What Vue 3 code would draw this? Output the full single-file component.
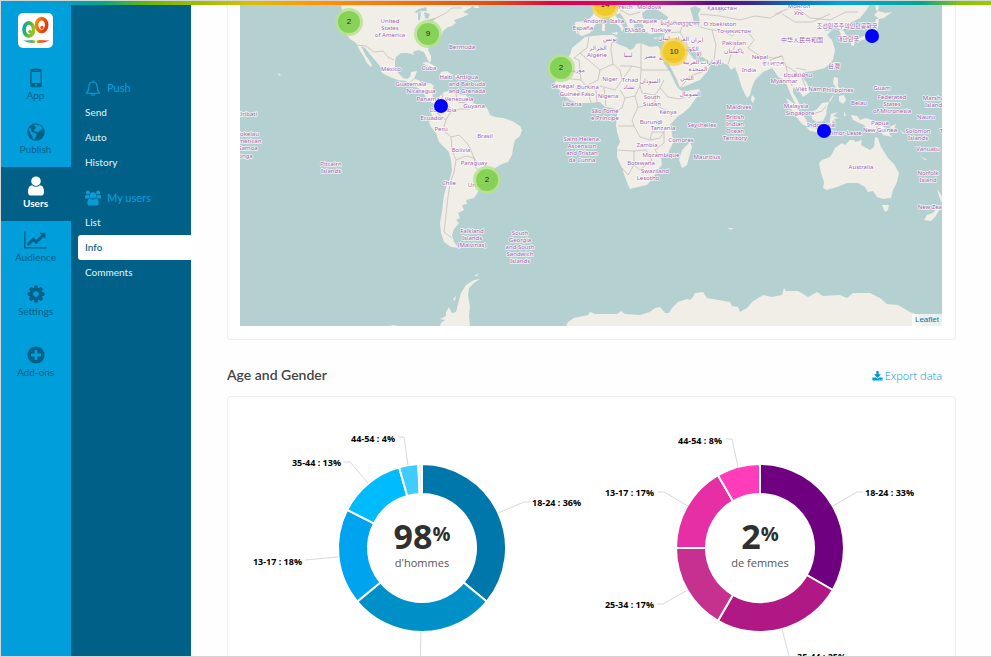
<script setup>
const railItems = [
  { label: 'App', icon: 'phone' },
  { label: 'Publish', icon: 'globe' },
  { label: 'Users', icon: 'user', active: true },
  { label: 'Audience', icon: 'chart' },
  { label: 'Settings', icon: 'gear' },
  { label: 'Add-ons', icon: 'plus', spaced: true },
]

const menuGroups = [
  { title: 'Push', icon: 'bell', items: ['Send', 'Auto', 'History'] },
  { title: 'My users', icon: 'group', items: ['List', 'Info', 'Comments'] },
]
const activeMenu = 'Info'

// The map canvas spans 702 x 321 units with its origin at (240, 5).
const MAP = { x: 240, y: 5, w: 702, h: 321 }
const place = (m) => ({
  left: ((m.x - MAP.x) / MAP.w) * 100 + '%',
  top: ((m.y - MAP.y) / MAP.h) * 100 + '%',
})

const clusters = [
  { x: 349, y: 22, n: 2, tone: 'green' },
  { x: 428, y: 34, n: 9, tone: 'green' },
  { x: 561, y: 68, n: 2, tone: 'green' },
  { x: 487, y: 180, n: 2, tone: 'green' },
  { x: 605, y: 5, n: 14, tone: 'yellow' },
  { x: 674, y: 52, n: 10, tone: 'yellow' },
]
const dots = [
  { x: 441, y: 106 },
  { x: 872, y: 36 },
  { x: 824, y: 131 },
]

const land = [
  // North and Central America
  'M341 5 343 14 342 25 346 34 350 39 356 43 358 47 360 51 364 57 367 63 371 67 372 65 369 60 366 56 363 50 361 46 365 48 369 53 374 59 379 65 382 69 382 73 390 77 398 80 406 81 412 85 418 88 423 91 425 96 428 100 434 104 440 104 444 102 438 100 433 97 432 91 434 86 430 83 422 84 419 80 414 79 416 74 417 71 411 72 410 77 407 79 403 78 399 74 395 67 395 61 396 57 401 53 408 53 414 55 413 52 418 50 424 52 427 58 429 63 431 61 431 56 428 50 429 45 436 38 442 35 443 31 448 27 452 26 456 23 454 20 463 17 469 14 463 12 470 8 474 5Z',
  'M472 5 478 5 479 8 475 8Z',
  'M422 63 427 62 433 65 438 69 434 70 428 66Z M441 72 447 71 452 75 446 77 440 75Z M455 75 459 75 459 77 455 77Z',
  // South America
  'M438 102 439 97 444 92 449 91 456 94 466 95 469 100 475 104 480 105 487 108 490 115 495 117 503 118 512 121 520 126 522 130 520 136 515 140 513 148 512 155 508 162 502 164 495 168 493 176 488 187 479 189 477 194 474 198 466 200 467 204 462 205 464 210 458 213 460 218 456 220 459 223 454 229 452 235 454 242 459 248 451 247 444 242 441 233 440 223 442 212 443 203 444 195 447 184 449 182 452 170 451 160 449 152 444 147 439 142 436 133 431 127 429 122 433 117 431 113 435 108Z',
  // Africa
  'M585 37 593 36 603 35 613 35 616 37 614 42 620 45 626 47 630 50 634 48 636 44 641 43 650 47 658 46 662 53 663 62 670 72 675 83 678 88 683 92 692 90 700 89 698 95 690 107 683 113 677 117 670 125 672 133 673 143 668 153 661 158 662 165 657 170 653 178 647 185 638 187 630 189 628 185 625 177 622 168 617 157 617 148 620 142 617 132 616 125 617 117 617 110 612 108 605 107 600 102 590 103 577 103 570 100 563 95 558 88 555 83 557 78 557 72 556 65 562 60 570 55 572 48 578 43Z',
  'M690 142 692 147 689 157 687 165 682 168 679 160 682 150Z',
  // Europe and Asia
  'M594 5 593 15 587 21 575 22 576 33 582 36 590 33 595 25 602 18 608 17 613 21 620 27 622 32 624 28 620 22 615 15 620 13 625 20 628 27 632 34 635 32 634 25 640 22 643 25 644 31 650 34 657 33 665 33 664 43 662 52 665 58 667 60 672 70 677 80 680 88 688 85 700 80 707 72 710 66 706 62 700 62 694 59 688 52 686 47 690 47 695 52 701 56 710 62 720 62 728 65 731 70 735 67 738 75 742 88 747 98 750 95 752 87 755 80 763 72 772 68 775 72 778 77 785 80 788 88 792 97 796 105 802 110 800 105 797 99 793 93 793 87 800 92 803 97 810 92 807 83 802 77 805 72 813 71 825 68 833 60 835 50 832 40 827 35 832 30 826 31 823 28 829 24 832 27 838 28 842 37 847 42 848 38 843 30 850 23 860 18 868 8 869 5Z',
  'M602 24 605 24 605 31 602 31Z M611 33 618 32 617 35Z M653 38 658 37 656 39Z',
  'M752 95 755 98 753 103 751 100Z M831 66 835 61 835 67 833 70Z',
  'M851 41 855 40 854 46 851 45Z M856 39 864 36 870 33 874 28 876 19 879 19 878 27 875 34 868 38 860 41Z M874 15 878 11 886 13 892 12 884 18 879 19Z M875 5 879 5 878 11 876 10Z',
  'M834 77 838 78 838 86 841 91 836 88 833 83Z M839 96 844 95 846 100 843 104 839 101Z M829 101 834 94 834 95 830 102Z',
  // Indonesia
  'M786 98 792 102 799 111 806 119 808 127 802 124 795 115 790 107Z M807 128 814 128 823 130 832 133 822 133 810 131Z M811 113 817 109 822 103 829 102 827 107 826 115 823 121 817 122 812 119Z M831 114 838 112 833 116 839 118 834 119 837 125 833 120 831 126 830 120Z M836 133 845 132 838 136Z M844 111 846 116 844 116Z',
  'M851 115 857 116 860 120 866 118 877 122 884 127 887 130 892 137 883 135 880 131 873 133 867 130 864 125 857 122 853 120Z M889 127 896 124 894 129Z M899 129 905 134 903 134Z',
  // Australia and New Zealand
  'M819 163 822 160 830 157 833 152 835 148 842 143 845 145 850 140 854 140 855 142 862 140 861 145 870 150 874 147 875 137 878 138 881 147 883 150 888 158 894 164 899 173 897 182 893 190 891 198 883 199 877 197 873 191 868 192 865 187 858 183 847 183 837 187 827 190 823 188 824 182 821 173Z',
  'M882 205 889 205 888 210 885 212Z M937 189 942 196 942 203 940 199Z M924 220 927 215 933 213 937 208 940 209 935 217 931 221Z',
  'M919 155 927 160 925 160Z',
  // Antarctica
  'M440 326 441 323 445 320 440 319 446 316 446 312 449 307 452 313 456 312 459 300 461 293 464 288 466 285 474 280 480 279 474 283 469 288 468 295 470 307 469 315 470 326Z M453 299 456 296 455 301Z M474 276 479 273 477 276Z M388 326 393 325 399 326Z',
  'M566 326 568 322 574 318 588 315 590 312 595 314 617 314 621 311 625 314 640 315 650 312 655 308 660 307 665 313 669 313 672 308 678 302 687 299 690 300 693 297 695 293 703 292 707 298 730 302 732 306 738 307 740 312 747 308 752 302 763 295 772 297 782 295 784 288 786 291 798 291 808 297 817 292 823 296 840 295 847 298 853 293 870 293 880 298 887 304 898 305 910 312 918 315 922 326Z',
  'M728 228 733 228 731 230Z M278 73 281 75 279 76Z',
]

const lakes = [
  'M642 13 648 9 656 9 661 12 668 17 667 20 660 20 650 20 643 19Z M690 8 695 6 701 9 698 14 700 22 699 27 694 25 693 18Z M656 5 661 5 659 8Z',
  'M414 12 419 9 426 7 427 11 421 11 417 13Z M418 20 418 13 421 12 420 20Z M424 12 430 14 428 19 425 18Z M427 21 436 18 432 22Z',
  'M655 121 660 120 660 125 657 125Z M718 8 722 6 723 11 719 12Z',
]

const borders = [
  'M357 45 366 46 374 52 383 51 388 57 394 60',
  'M422 22 436 18 446 13 452 8 462 8',
  'M408 84 414 79M418 86 424 84M443 94 441 103 450 107 450 113 446 120 437 113M456 94 458 102 466 103 470 107M450 113 460 109 470 109M446 120 443 130 451 137 459 135 467 143 470 148 474 158 480 166M451 137 452 150 456 160 466 156 474 158M456 160 454 172 450 184 448 197 446 215 444 232 452 238M474 158 476 168 482 172 478 184',
  'M589 37 587 48 580 53 574 58M580 53 600 70 613 64 611 50 612 38M574 58 579 60 581 80 563 78M600 70 598 80 586 86 581 80M613 64 620 70 622 80 632 66 620 66M641 43 641 70 671 70M632 66 641 68M622 80 615 90 600 86M620 90 625 98 635 96 640 86 641 70M640 86 642 93 655 95 660 88 664 80M660 88 668 97 680 99 690 95M655 95 655 105 665 110 672 117M625 98 622 108 618 110M635 96 638 107 655 105M638 107 632 120 634 126 618 126M634 126 640 137 650 140 660 138 665 130M617 150 634 151 634 165 628 175 622 168M634 151 646 150 652 160 640 170 634 165M650 140 652 132 664 132 664 143 655 150 661 158M576 88 582 96 588 92 591 103M596 90 597 103M604 88 606 106',
  'M575 27 579 34M593 22 602 20M620 10 630 15 640 12M665 33 680 32 683 24M680 32 688 46M668 42 676 44 686 50M700 27 712 30 716 45 714 60M712 30 722 30 732 36 738 30 748 32M738 40 732 52 728 64M748 32 754 40 748 48 760 56 774 58 782 56M774 66 770 60 782 56 786 66 788 76 792 86M786 66 796 72 802 78 806 88M796 68 806 70M700 14 720 16 740 20 755 16 770 18 782 12M775 14 790 8 800 10 810 18 830 20 846 12 858 12M782 14 795 22 812 22 830 14M680 88 690 76 702 72',
  'M877 123 877 133M813 114 822 111 826 106M838 29 846 30',
]

// [x centre, baseline of first line, ...lines]
const places = [
  [390, 23, 'United', 'States', 'of America'], [462, 49, 'Bermuda'], [391, 71, 'México'],
  [429, 70, 'Cuba'], [446, 79, 'Haïti'], [467, 79, 'Antigua', 'and Barbuda', 'and Grenada'],
  [411, 86, 'Guatemala'], [421, 93, 'Nicaragua'], [428, 101, 'Panama'], [459, 101, 'Venezuela'],
  [474, 108, 'Guyana'], [443, 112, 'Colombia'], [432, 120, 'Ecuador'], [441, 131, 'Perú'],
  [461, 152, 'Bolivia'], [474, 165, 'Paraguay'], [449, 185, 'Chile'], [480, 187, 'Uruguay'],
  [485, 138, 'Brasil'], [247, 116, 'Kiribati'], [248, 136, 'Tokelau', 'American', 'Samoa'],
  [244, 158, 'Tonga'], [331, 166, 'Pitcairn', 'Islands'],
  [472, 233, 'Falkland', 'Islands', '(Malvinas)'],
  [520, 235, 'South', 'Georgia', 'and South', 'Sandwich', 'Islands'],
  [595, 23, 'Andorra'], [617, 23, 'Italia'], [643, 23, 'България'], [583, 30, 'España'],
  [635, 32, 'Ελλάδα'], [661, 32, 'Türkiye'], [618, 9, 'Österreich'], [649, 9, 'Moldova'],
  [680, 25, 'საქართველო'], [610, 41, 'تونس'], [598, 50, 'الجزائر'], [597, 57, 'Algérie'],
  [628, 57, 'ليبيا'], [650, 58, 'مصر'], [664, 40, 'لبنان'], [681, 41, 'العراق'], [697, 42, 'ایران'],
  [690, 51, 'الكويت'], [670, 60, 'السعودية'], [699, 56, 'الإ'], [702, 64, 'الإمارات العربية'], [698, 71, 'المتحدة'],
  [687, 80, 'اليمن'], [690, 96, 'الصومال'], [575, 72, 'موريتانيا'], [650, 83, 'السودان'],
  [610, 81, 'Niger'], [630, 82, 'Tchad'], [629, 89, 'تشاد'], [563, 88, 'Sénégal'], [588, 89, 'Burkina'],
  [577, 96, 'Guinée Faso'], [608, 98, 'Nigeria'], [572, 106, 'Liberia'],
  [605, 113, 'São Tomé', 'e Príncipe'], [652, 99, 'South', 'Sudan'], [668, 114, 'Kenya'],
  [651, 124, 'Burundi'], [663, 130, 'Tanzania'], [702, 127, 'Seychelles'], [681, 142, 'Comores'],
  [647, 147, 'Zambia'], [661, 157, 'Mozambique'], [641, 165, 'Botswana'], [655, 173, 'Swaziland'],
  [648, 180, 'Lesotho'], [707, 159, 'Mauritius'],
  [582, 141, 'Saint Helena,', 'Ascension', 'and Tristan', 'da Cunha'],
  [722, 10, 'Қазақстан'], [720, 26, "O'zbekiston"], [734, 33, 'Тоҷикистон'], [734, 45, 'Pakistan'],
  [734, 53, 'پاکستان'], [799, 8, 'Монгол', 'Улс'], [760, 59, 'Nepal'],
  [773, 66, 'বাংলাদেশ'], [749, 72, 'India'], [798, 77, 'ປະເທດລາວ'], [784, 83, 'Myanmar'],
  [809, 91, 'Việt Nam'], [838, 92, 'Philippines'], [739, 109, 'Maldives'],
  [735, 119, 'British', 'Indian', 'Ocean', 'Territory'], [796, 108, 'Malaysia'], [800, 115, 'Singapore'],
  [821, 127, 'Indonesia'], [845, 135, 'Timor-Leste'], [859, 105, 'Belau'], [882, 90, 'Guam'],
  [892, 99, 'Federated', 'States', 'of Micronesia'], [880, 125, 'Papua', 'New Guinea'],
  [935, 100, 'Marshall', 'Islands'], [926, 119, 'Nauru'], [918, 133, 'Solomon', 'Islands'],
  [949, 133, 'Tuvalu'], [928, 151, 'Vanuatu'], [861, 169, 'Australia'],
  [928, 175, 'Norfolk', 'Island'], [936, 209, 'New Zealand'],
]
const cjkPlaces = [
  [802, 42, '中华人民共和国'], [834, 68, '台灣'],
  [847, 28, '조선민주주의인민공화국'], [848, 41, '대한민국'],
]

const R = 84
const r = 54
const point = (radius, share) => {
  const a = share * 2 * Math.PI
  return `${(radius * Math.sin(a)).toFixed(2)} ${(-radius * Math.cos(a)).toFixed(2)}`
}
const slices = (parts) => {
  const total = parts.reduce((s, p) => s + p.value, 0)
  let at = 0
  return parts.map((p) => {
    const from = at / total
    at += p.value
    const to = at / total
    const big = to - from > 0.5 ? 1 : 0
    return {
      color: p.color,
      d: `M${point(R, from)}A${R} ${R} 0 ${big} 1 ${point(R, to)}L${point(r, to)}A${r} ${r} 0 ${big} 0 ${point(r, from)}Z`,
    }
  })
}

const charts = [
  {
    value: '98', caption: "d'hommes",
    slices: slices([
      { value: 36, color: '#0077aa' }, { value: 28, color: '#0090c8' }, { value: 18.5, color: '#00a3ee' },
      { value: 13.1, color: '#00bcff' }, { value: 3.7, color: '#40ccff' }, { value: 0.7, color: '#d9f3fd' },
    ]),
    labels: [
      { text: '18-24 : 36%', x: 110, y: -42, line: '76,-35 102,-46 108,-46' },
      { text: '13-17 : 18%', x: -120, y: 17, end: true, line: '-84,9 -117,12' },
      { text: '35-44 : 13%', x: -81, y: -82, end: true, line: '-54,-65 -72,-86 -78,-86' },
      { text: '44-54 : 4%', x: -27, y: -106, end: true, line: '-14,-83 -18,-111 -24,-111' },
      { text: '', x: 0, y: 0, line: '-1,84 -2,116' },
    ],
  },
  {
    value: '2', caption: 'de femmes',
    slices: slices([
      { value: 4, color: '#6f0080' }, { value: 3, color: '#af1885' }, { value: 2, color: '#c6318f' },
      { value: 2, color: '#e62fa5' }, { value: 1, color: '#ff3cb9' },
    ]),
    labels: [
      { text: '18-24 : 33%', x: 105, y: -52, line: '73,-42 97,-56 103,-56' },
      { text: '35-44 : 25%', x: 37, y: 112, line: '22,81 30,112' },
      { text: '25-34 : 17%', x: -106, y: 60, end: true, line: '-72,42 -97,56 -103,56' },
      { text: '13-17 : 17%', x: -106, y: -52, end: true, line: '-72,-42 -96,-56 -102,-56' },
      { text: '44-54 : 8%', x: -38, y: -104, end: true, line: '-22,-81 -28,-109 -34,-109' },
    ],
  },
]
</script>

<template>
  <div class="app">
    <div class="rainbow"></div>
    <div class="shell">
      <nav class="rail" aria-label="Main">
        <a class="logo" href="#" aria-label="Home">
          <svg viewBox="0 0 35 35">
            <defs>
              <linearGradient id="lg1" x1="0" y1="0" x2="1" y2="0.4">
                <stop offset="0" stop-color="#00a6b8" /><stop offset="0.5" stop-color="#3fb34f" /><stop offset="1" stop-color="#9ac31c" />
              </linearGradient>
              <linearGradient id="lg2" x1="0" y1="0" x2="1" y2="0.4">
                <stop offset="0" stop-color="#f39200" /><stop offset="1" stop-color="#e23c12" />
              </linearGradient>
              <linearGradient id="lg3"><stop offset="0" stop-color="#009fdf" /><stop offset="1" stop-color="#8fc31c" /></linearGradient>
              <linearGradient id="lg4"><stop offset="0" stop-color="#f39200" /><stop offset="1" stop-color="#e2001a" /></linearGradient>
            </defs>
            <ellipse cx="10.800" cy="16.500" rx="4.800" ry="6.600" fill="#fff" stroke="url(#lg1)" stroke-width="3.600" />
            <ellipse cx="23.600" cy="12" rx="5.100" ry="6.400" fill="#fff" stroke="url(#lg2)" stroke-width="3.600" />
            <circle cx="12" cy="18.600" r="1.700" fill="#7ab829" />
            <circle cx="24" cy="14.400" r="1.700" fill="#e8541a" />
            <path d="M4.800 27.300Q10 27.800 14 27Q17.400 27 17.400 28.500Q17.400 30 14 30Q9 29.800 4.800 27.300Z" fill="url(#lg3)" />
            <path d="M31.600 27.300Q26 27.800 22 27Q18.600 27 18.600 28.500Q18.600 30 22 30Q27 29.800 31.600 27.300Z" fill="url(#lg4)" />
          </svg>
        </a>
        <ul class="rail-list">
          <li v-for="item in railItems" :key="item.label" :class="{ spaced: item.spaced }">
            <a href="#" class="rail-item" :class="{ active: item.active }">
              <svg v-if="item.icon === 'phone'" class="rail-icon" viewBox="0 0 20 20">
                <path fill-rule="evenodd" d="M6 .8h8a1.800 1.800 0 0 1 1.800 1.800v14.800a1.800 1.800 0 0 1-1.800 1.800H6a1.800 1.800 0 0 1-1.800-1.800V2.600A1.800 1.800 0 0 1 6 .8ZM5.600 4v11h8.800V4ZM8.500 2.200v.6h3v-.6ZM10 16a1 1 0 1 0 0 2 1 1 0 0 0 0-2Z" />
              </svg>
              <svg v-else-if="item.icon === 'globe'" class="rail-icon" viewBox="0 0 20 20">
                <circle cx="10" cy="10" r="8.700" />
                <path fill="#009fdb" d="M3 6.200 4.200 5.800 5.200 7.400 5.400 9.200 6.900 10.600 9.400 11.400 10.600 12.800 9.900 14.800 8.600 16.200 8.200 17.800C6.400 17.200 6.600 15.400 6.300 13.800 4.800 12.600 4.200 11 3.700 9.400 2.800 8.200 2.600 7 3 6.200Z" />
                <path fill="#009fdb" d="M8 3 10.200 2.500 11.600 3.500 13.600 3 15.600 4.400 16.600 6.400 14.800 7.400 14.500 9 12.800 8.600 12.400 10.200 10.800 10.200 9.900 9 8 9.200 7.600 7.800 9.200 6.800 10.300 5.600 8.900 4.500Z" />
              </svg>
              <svg v-else-if="item.icon === 'user'" class="rail-icon" viewBox="96 96 1600 1600">
                <path d="M1536 1399q0 109-62.500 187t-150.500 78h-854q-88 0-150.500-78t-62.500-187q0-85 8.500-160.500t31.500-152 58.500-131 94-89 134.500-34.500q131 128 313 128t313-128q76 0 134.500 34.500t94 89 58.500 131 31.500 152 8.500 160.500zm-256-887q0 159-112.500 271.500t-271.500 112.500-271.500-112.500-112.500-271.500 112.500-271.500 271.500-112.500 271.500 112.500 112.500 271.500z" />
              </svg>
              <svg v-else-if="item.icon === 'chart'" class="rail-icon wide" viewBox="0 0 2048 1792">
                <path d="M2048 1536v128h-2048v-1536h128v1408h1920zm-128-1248v435q0 21-19.500 29.500t-35.500-7.500l-121-121-633 633q-10 10-23 10t-23-10l-233-233-416 416-192-192 585-585q10-10 23-10t23 10l233 233 464-464-121-121q-16-16-7.500-35.500t29.500-19.500h435q14 0 23 9t9 23z" />
              </svg>
              <svg v-else-if="item.icon === 'gear'" class="rail-icon" viewBox="0 0 1792 1792">
                <path d="M1152 896q0-106-75-181t-181-75-181 75-75 181 75 181 181 75 181-75 75-181zm512-109v222q0 12-8 23t-20 13l-185 28q-19 54-39 91 35 50 107 138 10 12 10 25t-9 23q-27 37-99 108t-94 71q-12 0-26-9l-138-108q-44 23-91 38-16 136-29 186-7 28-36 28h-222q-14 0-24.500-8.500t-11.500-21.500l-28-184q-49-16-90-37l-141 107q-10 9-25 9-14 0-25-11-126-114-165-168-7-10-7-23 0-12 8-23 15-21 51-66.500t54-70.500q-27-50-41-99l-183-27q-13-2-21-12.500t-8-23.500v-222q0-12 8-23t19-13l186-28q14-46 39-92-40-57-107-138-10-12-10-24 0-10 9-23 26-36 98.500-107.500t94.500-71.500q13 0 26 10l138 107q44-23 91-38 16-136 29-186 7-28 36-28h222q14 0 24.500 8.500t11.500 21.500l28 184q49 16 90 37l142-107q9-9 24-9 13 0 25 10 129 119 165 170 7 8 7 22 0 12-8 23-15 21-51 66.500t-54 70.500q26 50 41 98l183 28q13 2 21 12.500t8 23.500z" />
              </svg>
              <svg v-else class="rail-icon" viewBox="0 0 1792 1792">
                <path d="M1344 960v-128q0-26-19-45t-45-19h-256v-256q0-26-19-45t-45-19h-128q-26 0-45 19t-19 45v256h-256q-26 0-45 19t-19 45v128q0 26 19 45t45 19h256v256q0 26 19 45t45 19h128q26 0 45-19t19-45v-256h256q26 0 45-19t19-45zm320-64q0 209-103 385.500t-279.500 279.500-385.500 103-385.500-103-279.500-279.500-103-385.500 103-385.500 279.500-279.500 385.500-103 385.500 103 279.500 279.500 103 385.500z" />
              </svg>
              <span>{{ item.label }}</span>
            </a>
          </li>
        </ul>
      </nav>

      <nav class="submenu" aria-label="Users">
        <section v-for="group in menuGroups" :key="group.title" class="group">
          <h2 class="group-title">
            <svg v-if="group.icon === 'bell'" class="group-icon" viewBox="0 0 16 16">
              <path d="M8 .8V2M8 2C5 2.100 3.900 4.300 3.900 6.800 3.900 9.900 3 11.700 1.300 13.200H14.700C13 11.700 12.100 9.900 12.100 6.800 12.100 4.300 11 2.100 8 2ZM6.300 13.600A1.700 1.700 0 0 0 9.700 13.600" fill="none" stroke="currentColor" stroke-width="1.100" stroke-linejoin="round" stroke-linecap="round" />
            </svg>
            <svg v-else class="group-icon" viewBox="0 0 16 16" fill="currentColor">
              <circle cx="2.900" cy="2.500" r="2" /><circle cx="13.100" cy="2.500" r="2" />
              <path d="M0 8.500V6.500Q0 4.800 1.300 4.800 3 5.800 4.500 5 4.100 7 5 8.500ZM16 8.500V6.500Q16 4.800 14.700 4.800 13 5.800 11.500 5 11.900 7 11 8.500Z" />
              <circle cx="8" cy="5.400" r="3.200" />
              <path d="M2.400 13.400C2.400 10.500 3.200 8.600 5.200 8.600 6.900 10.100 9.100 10.100 10.800 8.600 12.800 8.600 13.600 10.500 13.600 13.400Q13.600 15.600 11.500 15.600H4.500Q2.400 15.600 2.400 13.400Z" />
            </svg>
            {{ group.title }}
          </h2>
          <ul>
            <li v-for="entry in group.items" :key="entry">
              <a href="#" class="entry" :class="{ current: entry === activeMenu }">{{ entry }}</a>
            </li>
          </ul>
        </section>
      </nav>

      <main class="content">
        <section class="card map-card">
          <div class="map">
            <svg class="world" viewBox="240 5 702 321" role="img" aria-label="World map">
              <rect x="240" y="5" width="702" height="321" fill="#b5d0d0" />
              <path v-for="(d, i) in land" :key="'l' + i" :d="d" class="land" />
              <path v-for="(d, i) in lakes" :key="'w' + i" :d="d" class="lake" />
              <path v-for="(d, i) in borders" :key="'b' + i" :d="d" class="border" />
              <text v-for="(p, i) in places" :key="'p' + i" class="place" :x="p[0]" :y="p[1]">
                <tspan v-for="(line, k) in p.slice(2)" :key="k" :x="p[0]" :y="p[1] + k * 7">{{ line }}</tspan>
              </text>
              <text v-for="p in cjkPlaces" :key="p[2]" class="place cjk" :x="p[0]" :y="p[1]">{{ p[2] }}</text>
            </svg>
            <button v-for="(c, i) in clusters" :key="'c' + i" type="button" class="cluster" :class="c.tone" :style="place(c)">
              <span>{{ c.n }}</span>
            </button>
            <button v-for="(d, i) in dots" :key="'d' + i" type="button" class="dot" aria-label="User" :style="place(d)"></button>
            <a class="attribution" href="#">Leaflet</a>
          </div>
        </section>

        <header class="section-head">
          <h1>Age and Gender</h1>
          <a href="#" class="export">
            <svg viewBox="0 0 1792 1600" fill="currentColor">
              <path d="M1344 1344q0-26-19-45t-45-19-45 19-19 45 19 45 45 19 45-19 19-45zm256 0q0-26-19-45t-45-19-45 19-19 45 19 45 45 19 45-19 19-45zm128-224v320q0 40-28 68t-68 28h-1472q-40 0-68-28t-28-68v-320q0-40 28-68t68-28h465l135 136q58 56 136 56t136-56l136-136h464q40 0 68 28t28 68zm-325-569q17 41-14 70l-448 448q-18 19-45 19t-45-19l-448-448q-31-29-14-70 17-39 59-39h256v-448q0-26 19-45t45-19h256q26 0 45 19t19 45v448h256q42 0 59 39z" />
            </svg>
            Export data
          </a>
        </header>

        <section class="card charts">
          <svg v-for="chart in charts" :key="chart.caption" class="donut" viewBox="-169 -151 338 300">
            <path v-for="(s, i) in chart.slices" :key="i" :d="s.d" :fill="s.color" class="slice" />
            <g v-for="(l, i) in chart.labels" :key="'t' + i">
              <polyline :points="l.line" class="leader" />
              <text v-if="l.text" :x="l.x" :y="l.y" class="label" :class="{ end: l.end }">{{ l.text }}</text>
            </g>
            <text x="0" y="1" class="total">{{ chart.value }}<tspan class="percent" dy="-8">%</tspan></text>
            <text x="0" y="19" class="caption">{{ chart.caption }}</text>
          </svg>
        </section>
      </main>
    </div>
  </div>
</template>

<style>
body {
  margin: 0;
  background: #fefefe;
}
</style>

<style scoped>
.app {
  box-sizing: border-box;
  height: 100vh;
  display: flex;
  flex-direction: column;
  overflow: hidden;
  border: 1px solid #d6d6d6;
  background: #fefefe;
  font-family: Lato, "Liberation Sans", sans-serif;
}
.rainbow {
  flex: none;
  height: 4px;
  background: linear-gradient(90deg, #009fdf 0%, #00a0d0 6%, #00a88c 10%, #6fb600 15%, #a8c000 21%, #d8c000 25%, #ff9a00 31%, #ff7200 40%, #e24a10 50%, #e20046 56%, #e4006e 62%, #c41c88 66%, #5c0a82 72%, #3b2a90 76%, #0072c0 80%, #00a5e6 85%, #00a890 93%, #8cc400 97%, #9aca00 100%);
}
.shell {
  flex: 1;
  min-height: 0;
  display: flex;
}
ul {
  list-style: none;
  margin: 0;
  padding: 0;
}
a {
  text-decoration: none;
}
.rail {
  flex: none;
  width: 70px;
  padding-top: 8px;
  box-sizing: border-box;
  background: #009fdb;
}
.logo {
  display: block;
  width: 35px;
  height: 35px;
  margin: 0 0 11px 17px;
  border-radius: 5px;
  background: #fff;
}
.logo svg {
  display: block;
}
.rail-item {
  display: flex;
  flex-direction: column;
  align-items: center;
  box-sizing: border-box;
  height: 54px;
  padding: 9px 1px 0 0;
  color: #006087;
  font-size: 10px;
  line-height: 15px;
}
.rail-item.active {
  background: #006087;
  color: #fff;
  font-weight: 700;
}
.spaced {
  margin-top: 7px;
}
.rail-icon {
  flex: none;
  width: 20px;
  height: 20px;
  fill: currentColor;
}
.rail-icon.wide {
  width: 23px;
}
.submenu {
  flex: none;
  width: 120px;
  padding-top: 70px;
  box-sizing: border-box;
  background: #006087;
}
.group {
  margin-bottom: 10px;
}
.group-title {
  display: flex;
  align-items: center;
  gap: 6px;
  height: 25px;
  margin: 0;
  padding-left: 14px;
  color: #0d9bd6;
  font-size: 11px;
  font-weight: 500;
}
.group-icon {
  width: 16px;
  height: 16px;
}
.entry {
  display: block;
  margin-left: 7px;
  padding-left: 7px;
  border-radius: 3px 0 0 3px;
  color: #dcebf2;
  font-size: 10px;
  font-weight: 500;
  line-height: 25px;
}
.entry.current {
  background: #fff;
  color: #006087;
}
.content {
  flex: 1;
  min-width: 0;
  padding: 0 35px 0 36px;
}
.card {
  border: 1px solid #eee;
  border-radius: 4px;
  background: #fff;
}
.map-card {
  border-top: 0;
  border-radius: 0 0 4px 4px;
  padding: 0 13px 13px 12px;
}
.map {
  position: relative;
  overflow: hidden;
}
.world {
  display: block;
  width: 100%;
}
.land {
  fill: #f1eee8;
}
.lake {
  fill: #b5d0d0;
}
.border {
  fill: none;
  stroke: #b3aeab;
  stroke-width: 0.6;
}
.place {
  font: 6px "Noto Sans", "DejaVu Sans", sans-serif;
  fill: #a05fa9;
  stroke: #fff;
  stroke-opacity: 0.8;
  stroke-width: 1.5px;
  stroke-linejoin: round;
  paint-order: stroke;
  text-anchor: middle;
}
.place.cjk {
  font: 6px "Noto Sans CJK KR", "Noto Sans CJK SC", sans-serif;
}
.cluster {
  position: absolute;
  width: 28px;
  height: 28px;
  padding: 3px;
  border: 0;
  border-radius: 50%;
  transform: translate(-50%, -50%);
  font: 8px/22px "Liberation Sans", sans-serif;
  color: #222;
}
.cluster span {
  display: block;
  height: 22px;
  border-radius: 50%;
}
.green {
  background: rgba(181, 226, 140, 0.8);
}
.green span {
  background: rgba(110, 204, 57, 0.7);
}
.yellow {
  background: rgba(241, 211, 87, 0.8);
}
.yellow span {
  background: rgba(240, 194, 12, 0.7);
}
.dot {
  position: absolute;
  width: 14px;
  height: 14px;
  padding: 0;
  border: 0;
  border-radius: 50%;
  background: #00f;
  transform: translate(-50%, -50%);
}
.attribution {
  position: absolute;
  right: 0;
  bottom: 0;
  padding: 0 3px;
  background: rgba(255, 255, 255, 0.7);
  color: #0078a8;
  font: 8px/12px "Liberation Sans", sans-serif;
}
.section-head {
  display: flex;
  align-items: flex-end;
  justify-content: space-between;
  height: 56px;
  padding: 0 14px 12px 0;
  box-sizing: border-box;
}
.section-head h1 {
  margin: 0;
  color: #444;
  font-size: 14px;
  font-weight: 600;
  line-height: 18px;
}
.export {
  display: flex;
  align-items: center;
  gap: 2px;
  color: #0097d7;
  font-family: "Open Sans", sans-serif;
  font-size: 11px;
  font-weight: 300;
  line-height: 16px;
}
.export svg {
  width: 11px;
  height: 10px;
}
.charts {
  display: grid;
  grid-template-columns: 1fr 1fr;
  padding: 0 26px 0 25px;
}
.donut {
  display: block;
  width: 100%;
  overflow: visible;
  font-family: "Open Sans", sans-serif;
}
.slice {
  stroke: #fff;
  stroke-width: 2;
}
.leader {
  fill: none;
  stroke: #d8d8d8;
  stroke-width: 1;
}
.label {
  font-size: 9px;
  font-weight: 700;
  fill: #000;
}
.label.end {
  text-anchor: end;
}
.total {
  font-size: 34px;
  font-weight: 700;
  fill: #303030;
  text-anchor: middle;
}
.percent {
  font-size: 20px;
}
.caption {
  font-size: 11px;
  font-weight: 400;
  fill: #555;
  text-anchor: middle;
}
</style>
